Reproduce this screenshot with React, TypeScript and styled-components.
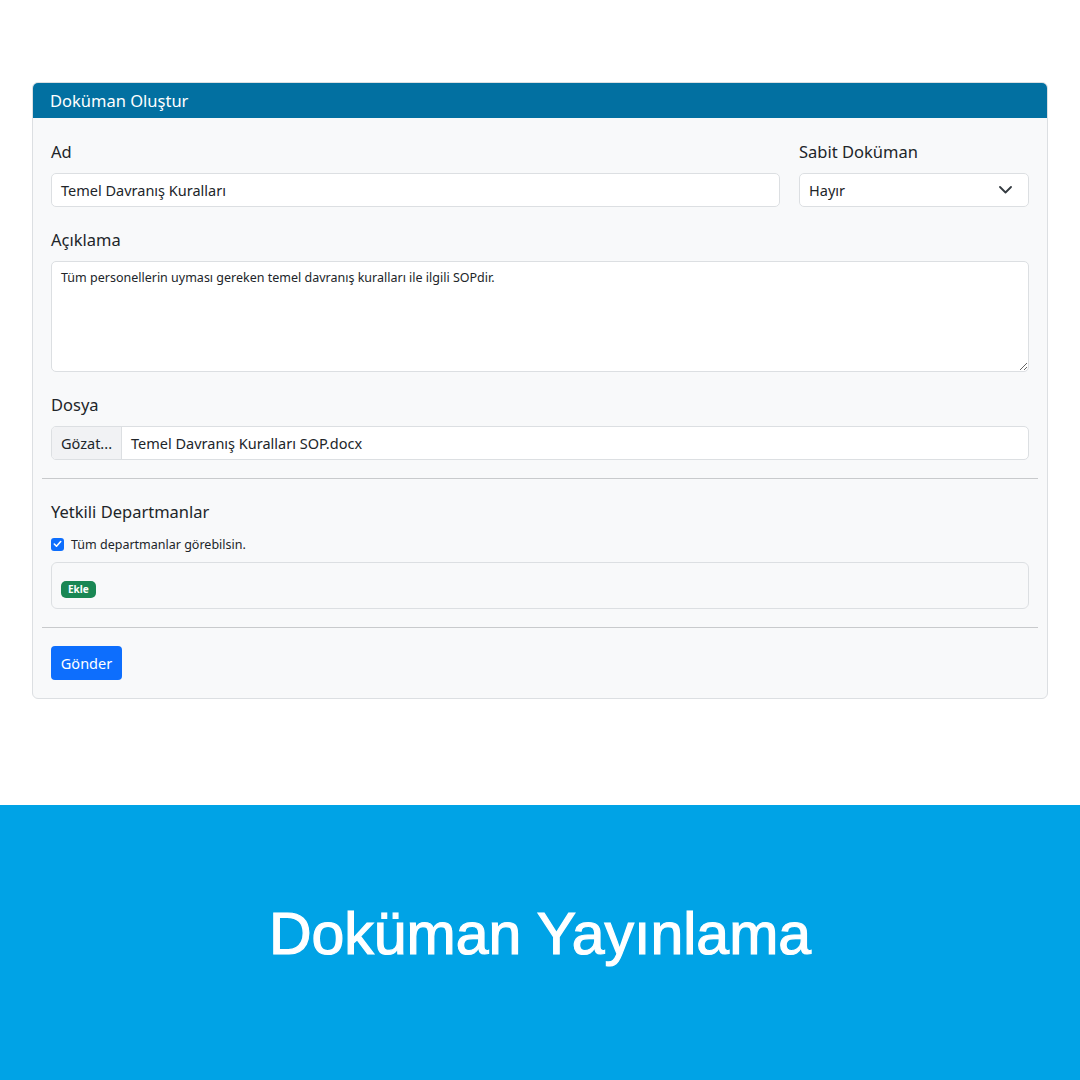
import React from "react";
import styled, { createGlobalStyle } from "styled-components";

const Global = createGlobalStyle`
  html, body { margin: 0; padding: 0; background: #ffffff; }
  body { font-family: "Noto Sans", "Open Sans", sans-serif; color: #212529; }
  * { box-sizing: border-box; }
`;

const Page = styled.div`
  width: 1080px;
  height: 1080px;
  display: flex;
  flex-direction: column;
  overflow: hidden;
`;

const Top = styled.div`
  padding: 82px 32px 0 32px;
  height: 805px;
`;

const Card = styled.div`
  border: 1px solid #dcdfe2;
  border-radius: 6px;
  background: #f8f9fa;
  overflow: hidden;
`;

const CardHeader = styled.div`
  height: 35px;
  background: #0270a1;
  color: #ffffff;
  font-size: 16.5px;
  line-height: 35px;
  padding-left: 17px;
`;

const CardBody = styled.div`
  padding: 9px 9px 18px 9px;
`;

const Section = styled.div`
  padding: 0 9px;
  display: flex;
  flex-direction: column;
`;

const Row = styled.div`
  display: grid;
  grid-template-columns: 1fr 230px;
  gap: 19px;
`;

const Field = styled.div<{ $mt?: number }>`
  display: flex;
  flex-direction: column;
  margin-top: ${(p) => p.$mt ?? 0}px;
`;

const Label = styled.div`
  font-size: 16.5px;
  line-height: 24px;
  margin-bottom: 9px;
  color: #212529;
`;

const Input = styled.div`
  height: 34px;
  background: #ffffff;
  border: 1px solid #dcdfe2;
  border-radius: 5px;
  font-size: 14.5px;
  line-height: 32px;
  padding: 0 9px;
  color: #212529;
`;

const Select = styled(Input)`
  display: flex;
  align-items: center;
  justify-content: space-between;
  padding-right: 16px;
`;

const TextArea = styled.textarea`
  height: 111px;
  background: #ffffff;
  border: 1px solid #dcdfe2;
  border-radius: 5px;
  font-family: "Noto Sans", "Open Sans", sans-serif;
  font-size: 12.5px;
  line-height: 18px;
  padding: 7px 9px;
  color: #212529;
  resize: vertical;
  outline: none;
  width: 100%;
  display: block;
`;

const FileInput = styled.div`
  height: 34px;
  display: flex;
  background: #ffffff;
  border: 1px solid #dcdfe2;
  border-radius: 5px;
  overflow: hidden;
  font-size: 14.5px;
  line-height: 32px;
`;

const FileButton = styled.div`
  width: 70px;
  background: #f1f2f4;
  border-right: 1px solid #dcdfe2;
  padding-left: 9px;
  color: #212529;
`;

const FileName = styled.div`
  padding-left: 9px;
  color: #212529;
`;

const Divider = styled.hr<{ $mt: number; $mb: number }>`
  border: 0;
  border-top: 1px solid #c8cacc;
  margin: ${(p) => p.$mt}px 0 ${(p) => p.$mb}px 0;
`;

const CheckRow = styled.label`
  display: flex;
  align-items: center;
  gap: 7px;
  height: 20px;
  margin-top: 1px;
  font-size: 12.5px;
`;

const CheckBox = styled.span`
  width: 13px;
  height: 13px;
  border-radius: 3px;
  background: #0d6efd;
  display: flex;
  align-items: center;
  justify-content: center;
`;

const DeptBox = styled.div`
  margin-top: 8px;
  height: 47px;
  border: 1px solid #dcdfe2;
  border-radius: 6px;
  padding: 18px 9px 0 9px;
  display: flex;
  align-items: flex-start;
`;

const Badge = styled.span`
  display: block;
  background: #198754;
  color: #ffffff;
  font-size: 10px;
  font-weight: 700;
  line-height: 17px;
  height: 17px;
  padding: 0 7px;
  border-radius: 5px;
`;

const Button = styled.button`
  width: 71px;
  height: 34px;
  border: 0;
  border-radius: 4px;
  background: #0d6efd;
  color: #ffffff;
  font-family: "Noto Sans", "Open Sans", sans-serif;
  font-size: 14.5px;
  padding: 0;
`;

const Band = styled.div`
  flex: 1;
  background: #00a3e6;
  display: flex;
  align-items: center;
  justify-content: center;
  padding-bottom: 18px;
`;

const BandTitle = styled.h1`
  margin: 0;
  color: #ffffff;
  font-family: "Liberation Sans", Arial, sans-serif;
  font-weight: 400;
  font-size: 59px;
  -webkit-text-stroke: 1.2px #ffffff;
`;

const Chevron = () => (
  <svg width="13" height="8" viewBox="0 0 13 8">
    <polyline points="1,1 6.5,6.5 12,1" fill="none" stroke="#343a40" strokeWidth="1.8" strokeLinecap="round" strokeLinejoin="round" />
  </svg>
);

const Check = () => (
  <svg width="9" height="8" viewBox="0 0 9 8">
    <polyline points="1.3,4 3.5,6.2 7.7,1.5" fill="none" stroke="#fff" strokeWidth="1.6" strokeLinecap="round" strokeLinejoin="round" />
  </svg>
);

export default function App() {
  return (
    <Page>
      <Global />
      <Top>
        <Card>
          <CardHeader>Doküman Oluştur</CardHeader>
          <CardBody>
            <Section>
              <Row>
                <Field $mt={13}>
                  <Label>Ad</Label>
                  <Input>Temel Davranış Kuralları</Input>
                </Field>
                <Field $mt={13}>
                  <Label>Sabit Doküman</Label>
                  <Select>
                    <span>Hayır</span>
                    <Chevron />
                  </Select>
                </Field>
              </Row>
              <Field $mt={21}>
                <Label>Açıklama</Label>
                <TextArea readOnly value="Tüm personellerin uyması gereken temel davranış kuralları ile ilgili SOPdir." />
              </Field>
              <Field $mt={21}>
                <Label>Dosya</Label>
                <FileInput>
                  <FileButton>Gözat...</FileButton>
                  <FileName>Temel Davranış Kuralları SOP.docx</FileName>
                </FileInput>
              </Field>
            </Section>
            <Divider $mt={18} $mb={21} />
            <Section>
              <Label>Yetkili Departmanlar</Label>
              <CheckRow>
                <CheckBox>
                  <Check />
                </CheckBox>
                Tüm departmanlar görebilsin.
              </CheckRow>
              <DeptBox>
                <Badge>Ekle</Badge>
              </DeptBox>
            </Section>
            <Divider $mt={18} $mb={18} />
            <Section>
              <div>
                <Button>Gönder</Button>
              </div>
            </Section>
          </CardBody>
        </Card>
      </Top>
      <Band>
        <BandTitle>Doküman Yayınlama</BandTitle>
      </Band>
    </Page>
  );
}
